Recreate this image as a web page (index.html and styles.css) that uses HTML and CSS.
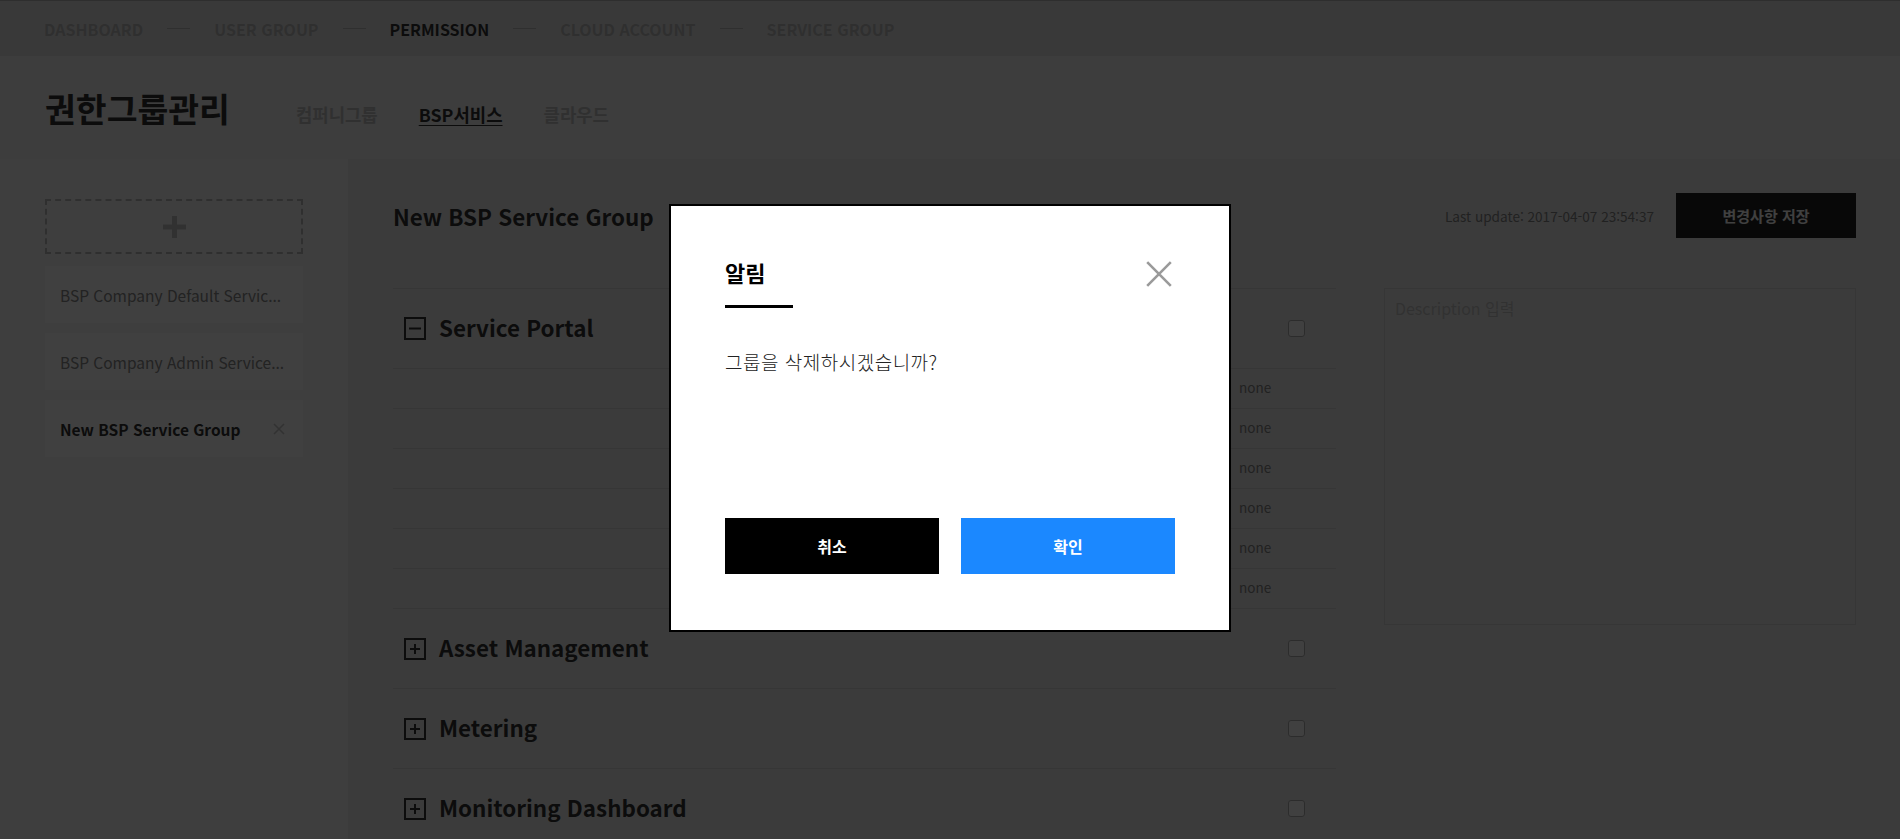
FILE: index.html
```html
<!DOCTYPE html>
<html lang="ko">
<head>
<meta charset="utf-8">
<title>권한그룹관리</title>
<link rel="stylesheet" href="styles.css">
</head>
<body>
<div class="app">
  <nav class="gnb">
    <a class="gnb-item">DASHBOARD</a><span class="gnb-sep"></span>
    <a class="gnb-item">USER GROUP</a><span class="gnb-sep"></span>
    <a class="gnb-item on">PERMISSION</a><span class="gnb-sep"></span>
    <a class="gnb-item">CLOUD ACCOUNT</a><span class="gnb-sep"></span>
    <a class="gnb-item">SERVICE GROUP</a>
  </nav>

  <header class="page-head">
    <h1 class="page-title">권한그룹관리</h1>
    <ul class="tabs">
      <li class="tab">컴퍼니그룹</li>
      <li class="tab on">BSP서비스</li>
      <li class="tab">클라우드</li>
    </ul>
  </header>

  <div class="layout">
    <aside class="side">
      <button class="add-group" type="button" aria-label="그룹 추가">
        <svg width="23" height="22" viewBox="0 0 23 22"><rect x="0" y="8.5" width="23" height="5" fill="#c4c4c4"/><rect x="9" y="0" width="5" height="22" fill="#c4c4c4"/></svg>
      </button>
      <ul class="group-list">
        <li class="group-item"><span class="group-name" title="BSP Company Default Service Group">BSP Company Default Servic...</span></li>
        <li class="group-item"><span class="group-name" title="BSP Company Admin Service Group">BSP Company Admin Service...</span></li>
        <li class="group-item on"><span class="group-name">New BSP Service Group</span>
          <svg class="group-del" width="12" height="12" viewBox="0 0 12 12"><path d="M1 1L11 11M11 1L1 11" stroke="#c8c8c8" stroke-width="1.6"/></svg>
        </li>
      </ul>
    </aside>

    <main class="content">
      <div class="content-head">
        <h2 class="content-title">New BSP Service Group</h2>
        <div class="meta">
          <span class="last-update">Last update: 2017-04-07 23:54:37</span>
          <button class="btn-save" type="button">변경사항 저장</button>
        </div>
      </div>

      <div class="content-body">
        <div class="perm-list">
          <section class="perm-group">
            <div class="perm-head">
              <svg class="toggle" width="22" height="23" viewBox="0 0 22 23"><rect x="1" y="1" width="20" height="21" fill="none" stroke="#333" stroke-width="2"/><path d="M5 11.5H17" stroke="#333" stroke-width="2"/></svg>
              <h3 class="perm-name">Service Portal</h3>
              <span class="check"></span>
            </div>
            <ul class="perm-rows">
              <li class="perm-row"><span class="perm-val">none</span></li>
              <li class="perm-row"><span class="perm-val">none</span></li>
              <li class="perm-row"><span class="perm-val">none</span></li>
              <li class="perm-row"><span class="perm-val">none</span></li>
              <li class="perm-row"><span class="perm-val">none</span></li>
              <li class="perm-row"><span class="perm-val">none</span></li>
            </ul>
          </section>
          <section class="perm-group">
            <div class="perm-head">
              <svg class="toggle" width="22" height="22" viewBox="0 0 22 22"><rect x="1" y="1" width="20" height="20" fill="none" stroke="#333" stroke-width="2"/><path d="M6 11H16M11 6V16" stroke="#333" stroke-width="2"/></svg>
              <h3 class="perm-name">Asset Management</h3>
              <span class="check"></span>
            </div>
          </section>
          <section class="perm-group">
            <div class="perm-head">
              <svg class="toggle" width="22" height="22" viewBox="0 0 22 22"><rect x="1" y="1" width="20" height="20" fill="none" stroke="#333" stroke-width="2"/><path d="M6 11H16M11 6V16" stroke="#333" stroke-width="2"/></svg>
              <h3 class="perm-name">Metering</h3>
              <span class="check"></span>
            </div>
          </section>
          <section class="perm-group">
            <div class="perm-head">
              <svg class="toggle" width="22" height="22" viewBox="0 0 22 22"><rect x="1" y="1" width="20" height="20" fill="none" stroke="#333" stroke-width="2"/><path d="M6 11H16M11 6V16" stroke="#333" stroke-width="2"/></svg>
              <h3 class="perm-name">Monitoring Dashboard</h3>
              <span class="check"></span>
            </div>
          </section>
        </div>
        <textarea class="desc" placeholder="Description 입력"></textarea>
      </div>
    </main>
  </div>
</div>

<div class="dim">
  <div class="modal" role="dialog">
    <div class="modal-head">
      <h2 class="modal-title">알림</h2>
      <button class="modal-close" type="button" aria-label="닫기">
        <svg width="26" height="26" viewBox="0 0 26 26"><path d="M1.2 1.2L24.8 24.8M24.8 1.2L1.2 24.8" stroke="#9a9a9a" stroke-width="2.6"/></svg>
      </button>
    </div>
    <p class="modal-msg">그룹을 삭제하시겠습니까?</p>
    <div class="modal-btns">
      <button class="btn-cancel" type="button">취소</button>
      <button class="btn-ok" type="button">확인</button>
    </div>
  </div>
</div>
</body>
</html>
```
FILE: styles.css
```css
html, body {
  margin: 0;
  height: 100%;
  overflow: hidden;
}

body {
  font-family: "Noto Sans CJK KR", "Noto Sans", sans-serif;
  background: #ececec;
  color: #333;
}

ul { margin: 0; padding: 0; list-style: none; }
h1, h2, h3, p { margin: 0; }
button { font-family: inherit; cursor: pointer; }

/* top navigation */
.gnb {
  height: 55px;
  border-top: 1px solid #b8b8b8;
  background: #e4e4e4;
  display: flex;
  align-items: center;
  gap: 24px;
  padding-left: 44px;
}
.gnb-item {
  font-size: 16px;
  font-weight: 700;
  line-height: 24px;
  color: #bcbcbc;
}
.gnb-item.on { color: #333; }
.gnb-sep {
  width: 23px;
  height: 1px;
  background: #bcbcbc;
}

/* page heading */
.page-head {
  height: 103px;
  box-sizing: border-box;
  padding: 32px 45px 0;
  background: #f2f2f2;
  display: flex;
  align-items: baseline;
}
.page-title {
  font-size: 33.5px;
  font-weight: 700;
  line-height: 40px;
  color: #333;
}
.tabs {
  display: flex;
  gap: 41px;
  margin-left: 66px;
}
.tab {
  font-size: 17.8px;
  font-weight: 700;
  line-height: 24px;
  color: #c0c0c0;
}
.tab.on {
  color: #333;
  text-decoration: underline;
  text-underline-offset: 3px;
}

/* layout */
.layout {
  display: flex;
  min-height: calc(100vh - 159px);
}

/* sidebar */
.side {
  width: 348px;
  flex: none;
  box-sizing: border-box;
  padding: 40px 45px;
  background: #f8f8f8;
}
.add-group {
  display: flex;
  align-items: center;
  justify-content: center;
  width: 100%;
  height: 55px;
  margin-bottom: 12px;
  border: 2px dashed #bcbcbc;
  background: transparent;
  padding: 0;
}
.group-list {
  display: flex;
  flex-direction: column;
  gap: 10px;
}
.group-item {
  height: 57px;
  display: flex;
  align-items: center;
  padding: 0 10px 0 15px;
  background: #fff;
  font-size: 15.5px;
  color: #8a8a8a;
}
.group-name {
  flex: 1;
  min-width: 0;
  white-space: nowrap;
  overflow: hidden;
}
.group-item.on {
  padding-right: 18px;
  font-weight: 700;
  color: #333;
}
.group-del { flex: none; margin-left: 12px; }

/* content */
.content {
  flex: 1;
  min-width: 0;
  padding: 34px 44px 0 45px;
}
.content-head {
  height: 45px;
  display: flex;
  align-items: center;
  justify-content: space-between;
  margin-bottom: 50px;
}
.content-title {
  font-size: 22.4px;
  font-weight: 700;
  line-height: 30px;
  color: #333;
}
.meta {
  display: flex;
  align-items: center;
  gap: 22px;
}
.last-update {
  font-size: 13.6px;
  color: #848484;
}
.btn-save {
  width: 180px;
  height: 45px;
  border: 0;
  background: #222;
  color: #fff;
  font-size: 15px;
  font-weight: 700;
}

.content-body {
  display: grid;
  grid-template-columns: 1fr 472px;
  gap: 48px;
  align-items: start;
}

.perm-list { border-top: 1px solid #d8d8d8; }
.perm-head {
  height: 80px;
  box-sizing: border-box;
  border-bottom: 1px solid #d8d8d8;
  display: flex;
  align-items: center;
  padding: 0 31px 0 11px;
}
.toggle { flex: none; }
.perm-name {
  margin: 0 0 4px 13px;
  font-size: 22.4px;
  font-weight: 700;
  line-height: 30px;
  color: #333;
}
.check {
  margin-left: auto;
  width: 17px;
  height: 17px;
  box-sizing: border-box;
  border: 1px solid #b0b0b0;
  border-radius: 3px;
  background: #fff;
}
.perm-row {
  height: 40px;
  box-sizing: border-box;
  border-bottom: 1px solid #d8d8d8;
  display: grid;
  grid-template-columns: 1fr 97px;
  align-items: center;
}
.perm-val {
  grid-column: 2;
  margin-bottom: 4px;
  font-size: 13.5px;
  color: #848484;
}

.desc {
  width: 472px;
  height: 337px;
  box-sizing: border-box;
  margin: 0;
  padding: 9px 10px;
  border: 1px solid #d8d8d8;
  background: transparent;
  resize: none;
  font-family: inherit;
  font-size: 16px;
  line-height: 20px;
  color: #333;
}
.desc::placeholder { color: #c4c4c4; }

/* modal */
.dim {
  position: fixed;
  inset: 0;
  background: rgba(0, 0, 0, 0.75);
  display: flex;
  align-items: center;
  justify-content: center;
}
.modal {
  width: 562px;
  height: 428px;
  box-sizing: border-box;
  margin-bottom: 3px;
  padding: 51px 54px 56px;
  border: 2px solid #000;
  background: #fff;
  display: flex;
  flex-direction: column;
}
.modal-head {
  display: flex;
  justify-content: space-between;
  align-items: flex-start;
}
.modal-title {
  width: 68px;
  padding-bottom: 18px;
  border-bottom: 3px solid #000;
  font-size: 22px;
  font-weight: 700;
  line-height: 30px;
  color: #000;
}
.modal-close {
  width: 26px;
  height: 26px;
  margin: 4px 3px 0 0;
  padding: 0;
  border: 0;
  background: none;
  display: flex;
}
.modal-msg {
  margin-top: 40px;
  font-size: 19px;
  font-weight: 300;
  letter-spacing: 0.5px;
  line-height: 28px;
  color: #222;
}
.modal-btns {
  margin-top: auto;
  display: flex;
  gap: 22px;
}
.modal-btns button {
  flex: 1;
  height: 56px;
  border: 0;
  color: #fff;
  font-size: 16px;
  font-weight: 700;
}
.btn-cancel { background: #000; }
.btn-ok { background: #1b88ff; }
```
